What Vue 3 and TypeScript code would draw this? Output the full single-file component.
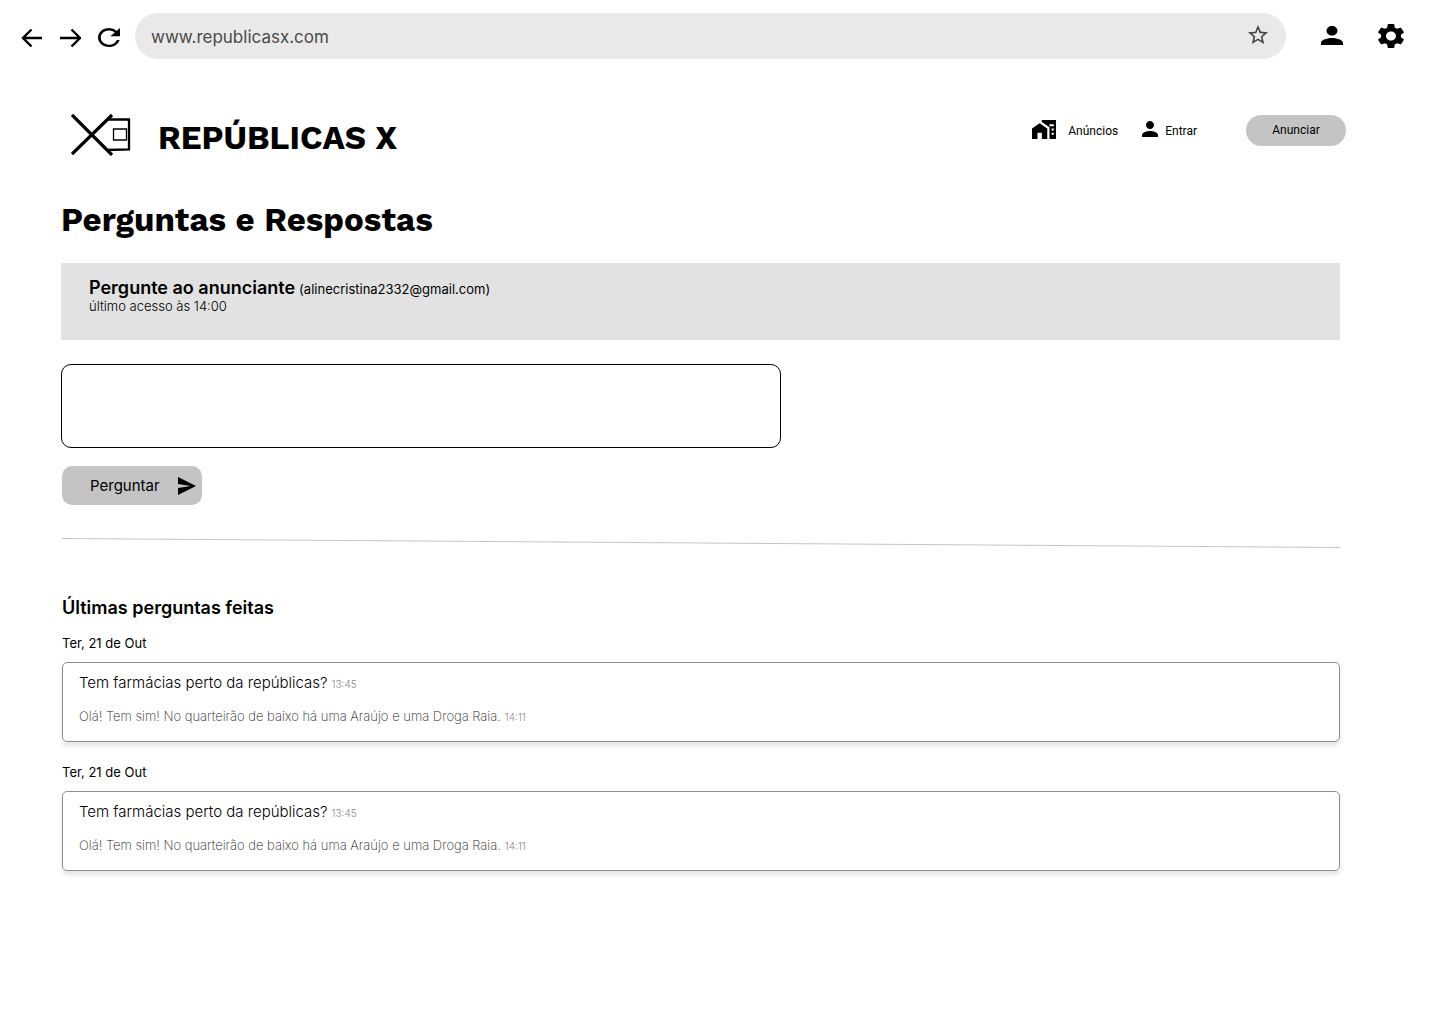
<script setup lang="ts">
import { ref } from 'vue'

interface Thread {
  id: number
  date: string
  question: string
  askedAt: string
  answer: string
  answeredAt: string
}

const url = ref('www.republicasx.com')
const draft = ref('')

const threads: Thread[] = [1, 2].map((id) => ({
  id,
  date: 'Ter, 21 de Out',
  question: 'Tem farmácias perto da repúblicas?',
  askedAt: '13:45',
  answer: 'Olá! Tem sim! No quarteirão de baixo há uma Araújo e uma Droga Raia.',
  answeredAt: '14:11',
}))
</script>

<template>
  <div class="window">
    <div class="toolbar">
      <div class="nav-buttons">
        <button type="button" class="icon-button" aria-label="Voltar">
          <svg width="22" height="20" viewBox="0 0 22 20" class="stroke">
            <path d="M22 10H3M11.500 1.500L3 10l8.500 8.500" />
          </svg>
        </button>
        <button type="button" class="icon-button" aria-label="Avançar">
          <svg width="22" height="20" viewBox="0 0 22 20" class="stroke">
            <path d="M1 10h20M12.500 1.500L21 10l-8.500 8.500" />
          </svg>
        </button>
        <button type="button" class="icon-button" aria-label="Recarregar">
          <svg width="22" height="19" viewBox="4 4 16 16" preserveAspectRatio="none">
            <path d="M17.650 6.350A7.958 7.958 0 0 0 12 4c-4.420 0-7.990 3.580-7.990 8s3.570 8 7.990 8c3.730 0 6.840-2.550 7.730-6h-2.080A5.990 5.990 0 0 1 12 18c-3.310 0-6-2.690-6-6s2.690-6 6-6c1.660 0 3.140.69 4.220 1.780L13 11h7V4l-2.350 2.350z" />
          </svg>
        </button>
      </div>
      <div class="address">
        <input v-model="url" type="text" class="address-input" aria-label="Endereço" />
        <button type="button" class="icon-button star" aria-label="Favoritar">
          <svg width="20" height="19" viewBox="2 2 20 19" fill="#444">
            <path d="M22 9.240l-7.190-.62L12 2 9.190 8.630 2 9.240l5.460 4.730L5.820 21 12 17.270 18.180 21l-1.630-7.030L22 9.240zM12 15.400l-3.760 2.270 1-4.280-3.320-2.880 4.380-.38L12 6.100l1.710 4.040 4.380.38-3.320 2.880 1 4.280L12 15.400z" />
          </svg>
        </button>
      </div>
      <div class="tools">
        <button type="button" class="icon-button" aria-label="Perfil">
          <svg width="22" height="19" viewBox="4 4 16 16" preserveAspectRatio="none">
            <path d="M12 12c2.210 0 4-1.790 4-4s-1.790-4-4-4-4 1.790-4 4 1.790 4 4 4zm0 2c-2.670 0-8 1.340-8 4v2h16v-2c0-2.660-5.330-4-8-4z" />
          </svg>
        </button>
        <button type="button" class="icon-button" aria-label="Configurações">
          <svg width="26" height="24" viewBox="2.600 2.400 18.800 19.200" preserveAspectRatio="none">
            <path d="M19.140 12.940c.04-.3.06-.61.06-.94 0-.32-.02-.64-.07-.94l2.030-1.580c.18-.14.23-.41.12-.61l-1.920-3.320c-.12-.22-.37-.29-.59-.22l-2.390.96c-.5-.38-1.030-.7-1.620-.94l-.36-2.540c-.04-.24-.24-.41-.48-.41h-3.840c-.24 0-.43.17-.47.41l-.36 2.540c-.59.24-1.130.57-1.620.94l-2.390-.96c-.22-.08-.47 0-.59.22L2.740 8.870c-.12.21-.08.47.12.61l2.030 1.580c-.05.3-.09.63-.09.94s.02.64.07.94l-2.030 1.580c-.18.14-.23.41-.12.61l1.920 3.320c.12.22.37.29.59.22l2.390-.96c.5.38 1.030.7 1.620.94l.36 2.540c.05.24.24.41.48.41h3.840c.24 0 .44-.17.47-.41l.36-2.540c.59-.24 1.130-.56 1.620-.94l2.390.96c.22.08.47 0 .59-.22l1.920-3.320c.12-.22.07-.47-.12-.61l-2.010-1.580zM12 15.600c-1.980 0-3.600-1.620-3.600-3.600s1.620-3.600 3.600-3.600 3.600 1.620 3.600 3.600-1.620 3.600-3.600 3.600z" />
          </svg>
        </button>
      </div>
    </div>

    <header class="site-header">
      <a href="#" class="brand">
        <svg class="logo" width="60" height="43" viewBox="0 0 60 43" fill="none" stroke="#000">
          <path d="M1 2L41 42M1 41L41 2" stroke-width="3.200" />
          <path d="M37 6.500H58V36.500L36 37" stroke-width="2.300" />
          <path d="M42.500 16H55.500V27H42.500Z" stroke-width="1.300" />
        </svg>
        <span class="brand-name">REPÚBLICAS X</span>
      </a>
      <nav class="site-nav">
        <a href="#" class="nav-link listings">
          <svg width="24" height="19" viewBox="1 3 22 18" preserveAspectRatio="none">
            <path d="M1 11v10h5v-6h4v6h5V11L8 6z" />
            <path fill-rule="evenodd" d="M10 3v1.970l7 5V21h6V3zm7 4h2v2h-2zm2 4h2v2h-2zm0 4h2v2h-2zm0-8h2v2h-2z" />
          </svg>
          <span>Anúncios</span>
        </a>
        <a href="#" class="nav-link">
          <svg width="16" height="16" viewBox="4 4 16 16">
            <path d="M12 12c2.210 0 4-1.790 4-4s-1.790-4-4-4-4 1.790-4 4 1.790 4 4 4zm0 2c-2.670 0-8 1.340-8 4v2h16v-2c0-2.660-5.330-4-8-4z" />
          </svg>
          <span>Entrar</span>
        </a>
        <button type="button" class="advertise">Anunciar</button>
      </nav>
    </header>

    <main class="content">
      <h1 class="title">Perguntas e Respostas</h1>

      <section class="advertiser">
        <div class="advertiser-line">
          <label for="question" class="advertiser-title">Pergunte ao anunciante</label>
          <span class="email">(alinecristina2332@gmail.com)</span>
        </div>
        <div class="last-seen">último acesso às 14:00</div>
      </section>

      <form class="ask" @submit.prevent>
        <textarea id="question" v-model="draft" class="question-box"></textarea>
        <button type="submit" class="ask-button">
          <span>Perguntar</span>
          <svg width="18" height="18" viewBox="2 3 21 18" preserveAspectRatio="none">
            <path d="M2.010 21L23 12 2.010 3 2 10l15 2-15 2z" />
          </svg>
        </button>
      </form>

      <svg class="divider" height="10" viewBox="0 0 1278 10" preserveAspectRatio="none" aria-hidden="true">
        <path d="M0 .5L1278 9.500" stroke="#c4c4c4" />
      </svg>

      <section>
        <h2 class="subtitle">Últimas perguntas feitas</h2>
        <article v-for="thread in threads" :key="thread.id" class="thread">
          <div class="thread-date">{{ thread.date }}</div>
          <div class="card">
            <p class="question">{{ thread.question }}<time class="time">{{ thread.askedAt }}</time></p>
            <p class="answer">{{ thread.answer }}<time class="time">{{ thread.answeredAt }}</time></p>
          </div>
        </article>
      </section>
    </main>
  </div>
</template>

<style>
body {
  margin: 0;
  background: #fff;
}
</style>

<style scoped>
.window {
  font-family: Inter, sans-serif;
  color: #000;
}

.window * {
  box-sizing: border-box;
}

svg {
  display: block;
  flex: none;
}

button {
  font: inherit;
  color: inherit;
  border: 0;
  padding: 0;
  cursor: pointer;
}

a {
  color: inherit;
  text-decoration: none;
}

.icon-button {
  background: none;
}

.toolbar {
  display: flex;
  align-items: center;
  padding: 13px 36px 0 20px;
}

.nav-buttons {
  display: flex;
  align-items: center;
  gap: 17px;
  padding-top: 3px;
  margin-right: 15px;
}

.stroke {
  fill: none;
  stroke: #000;
  stroke-width: 2.4;
}

.address {
  flex: 1;
  display: flex;
  align-items: center;
  height: 46px;
  padding: 0 18px 0 16px;
  border-radius: 23px;
  background: #e9e9e9;
}

.address-input {
  flex: 1;
  min-width: 0;
  padding: 2px 0 0;
  border: 0;
  outline: 0;
  background: none;
  font: 400 17px/24px Inter, sans-serif;
  color: #4a4a4a;
}

.star {
  padding-bottom: 3px;
}

.tools {
  display: flex;
  align-items: center;
  gap: 35px;
  margin-left: 35px;
  padding-bottom: 1px;
}

.site-header {
  display: flex;
  justify-content: space-between;
  align-items: flex-start;
  padding: 54px 94px 0 71px;
}

.brand {
  display: flex;
  align-items: flex-start;
  gap: 27px;
}

.brand-name,
.title {
  font-family: "Work Sans", Inter, sans-serif;
  font-weight: 700;
  font-size: 33px;
  line-height: 50px;
}

.site-nav {
  display: flex;
  align-items: center;
  padding-top: 2px;
  font-family: Roboto, sans-serif;
  font-size: 12px;
  line-height: 16px;
}

.nav-link {
  display: flex;
  align-items: center;
  gap: 7px;
}

.nav-link svg {
  margin-bottom: 3px;
}

.listings {
  gap: 12px;
  margin-right: 24px;
}

.advertise {
  width: 100px;
  height: 31px;
  margin-left: 49px;
  padding-bottom: 2px;
  border-radius: 16px;
  background: #c4c4c4;
}

.content {
  padding: 32px 100px 40px 61px;
}

.title {
  margin: 0;
}

.advertiser {
  margin-top: 18px;
  height: 77px;
  padding: 13px 28px;
  background: #e2e2e2;
}

.advertiser-line {
  display: flex;
  align-items: baseline;
  gap: 4px;
  line-height: 24px;
  height: 22px;
}

.advertiser-title,
.subtitle {
  font-size: 18px;
  font-weight: 600;
}

.email,
.last-seen,
.thread-date {
  font-size: 13px;
  line-height: 16px;
}

.last-seen {
  font-weight: 300;
}

.ask {
  display: flex;
  flex-direction: column;
  align-items: flex-start;
  gap: 18px;
  margin-top: 24px;
}

.question-box {
  width: 100%;
  max-width: 720px;
  height: 84px;
  padding: 12px;
  border: 1px solid #000;
  border-radius: 10px;
  background: #fff;
  font: 15px/20px Inter, sans-serif;
  resize: none;
}

.ask-button {
  display: flex;
  align-items: center;
  justify-content: space-between;
  width: 140px;
  height: 39px;
  margin-left: 1px;
  padding: 0 6px 0 28px;
  border-radius: 10px;
  background: #c4c4c4;
  font-size: 15px;
}

.divider {
  width: 100%;
  margin-top: 33px;
  padding-left: 1px;
}

.subtitle {
  margin: 48px 0 0 1px;
  line-height: 24px;
}

.thread {
  margin: 15px 0 0 1px;
}

.thread + .thread {
  margin-top: 22px;
}

.card {
  margin-top: 11px;
  height: 80px;
  padding: 10px 16px;
  border: 1px solid #8f8f8f;
  border-radius: 5px;
  box-shadow: 0 4px 4px rgba(0, 0, 0, 0.1);
}

.question {
  margin: 0;
  font-size: 15px;
  font-weight: 300;
  line-height: 20px;
}

.answer {
  margin: 12px 0 0;
  font-size: 13px;
  font-weight: 200;
  line-height: 20px;
  color: #222;
}

.time {
  margin-left: 4px;
  font-size: 10px;
  font-weight: 300;
  color: #888;
}
</style>
